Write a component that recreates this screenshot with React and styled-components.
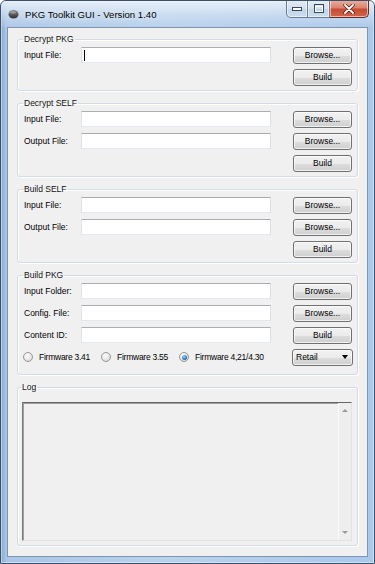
import React from "react";
import styled, { createGlobalStyle, css } from "styled-components";

const GlobalStyle = createGlobalStyle`
  * { box-sizing: border-box; }
  html, body { margin: 0; padding: 0; background: #ffffff; }
  body { font-family: "Liberation Sans", Arial, sans-serif; }
`;

const Window = styled.div`
  width: 375px;
  height: 564px;
  display: flex;
  flex-direction: column;
  padding: 0 6px 6px;
  border: 1px solid #3b4f66;
  border-radius: 6px 6px 0 0;
  background: linear-gradient(90deg, #86a8d0 0, #a9c6e8 5px, #b9d2ee 45%, #a9c8ec 100%);
  box-shadow: inset 0 0 0 1px rgba(255, 255, 255, 0.45);
  overflow: hidden;
`;

const TitleBar = styled.div`
  height: 26px;
  margin: 0 -6px;
  padding: 0 0 0 7px;
  display: flex;
  align-items: center;
  background: linear-gradient(180deg, rgba(240, 245, 251, 0.85) 0, rgba(214, 227, 242, 0.6) 55%, rgba(190, 210, 234, 0.2) 100%);
`;

const Title = styled.span`
  margin-left: 6px;
  font-size: 9.6px;
  color: #000;
  text-shadow: 0 0 6px rgba(255, 255, 255, 0.9);
`;

const Controls = styled.div`
  align-self: flex-start;
  margin: -1px 5px 0 auto;
  display: flex;
  height: 18px;
`;

const CtrlButton = styled.div`
  width: ${(p) => (p.$close ? 39 : 22)}px;
  height: 18px;
  display: flex;
  align-items: center;
  justify-content: center;
  border: 1px solid #6a7c92;
  border-top: none;
  border-left-width: ${(p) => (p.$first ? 1 : 0)}px;
  border-radius: ${(p) => (p.$first ? "0 0 0 5px" : p.$close ? "0 0 5px 0" : "0")};
  background: linear-gradient(180deg, #e4ecf5 0, #d3e0ee 50%, #c2d4e8 51%, #cddcee 100%);
  box-shadow: inset 0 0 0 1px rgba(255, 255, 255, 0.55);
  ${(p) =>
    p.$close &&
    css`
      border-color: #6b2a20;
      background: linear-gradient(180deg, #eab1a4 0, #db8470 45%, #c74a33 55%, #d0664c 100%);
    `}
`;

const Client = styled.div`
  flex: 1;
  min-height: 0;
  display: flex;
  flex-direction: column;
  gap: 7px;
  padding: 6px 9px 10px;
  background: #f0f0f0;
  border: 1px solid #8094ae;
`;

const Group = styled.fieldset`
  margin: 0;
  min-width: 0;
  padding: 0 5px 2px ${(p) => p.$inset ?? 6}px;
  border: 1px solid #d3dce2;
  border-radius: 3px;
  box-shadow: 1px 1px 0 #ffffff, inset 1px 1px 0 #ffffff;
  ${(p) =>
    p.$grow &&
    css`
      flex: 1;
      display: flex;
      flex-direction: column;
      padding-bottom: 4px;
    `}
`;

const Legend = styled.legend`
  margin-left: -1px;
  padding: 0 1px;
  font-size: 8.5px;
  line-height: 10px;
  color: #111;
`;

const Row = styled.div`
  height: ${(p) => (p.$tall ? 26 : 22)}px;
  padding-bottom: ${(p) => (p.$tall ? 4 : 0)}px;
  display: flex;
  align-items: center;
`;

const Label = styled.span`
  width: 57px;
  flex: none;
  font-size: 8.5px;
  color: #000;
  white-space: nowrap;
`;

const TextBox = styled.div`
  width: 190px;
  height: 16px;
  display: flex;
  align-items: center;
  padding-left: 2px;
  background: #ffffff;
  border: 1px solid;
  border-color: #abadb3 #dbdfe6 #e3e9ef #e2e3ea;
`;

const Caret = styled.span`
  width: 1px;
  height: 11px;
  background: #000;
`;

const buttonFace = css`
  height: 17px;
  font-family: "Liberation Sans", Arial, sans-serif;
  font-size: 8.5px;
  color: #000;
  border: 1px solid #707070;
  border-radius: 3px;
  background: linear-gradient(180deg, #f2f2f2 0, #ebebeb 50%, #dddddd 51%, #cfcfcf 100%);
  box-shadow: inset 0 0 0 1px rgba(255, 255, 255, 0.7);
`;

const Button = styled.button`
  ${buttonFace};
  width: 59px;
  margin-left: auto;
  padding: 0;
`;

const Select = styled.div`
  ${buttonFace};
  width: 61px;
  margin: 0 -1px 0 auto;
  padding: 0 4px 0 3px;
  display: flex;
  align-items: center;
  justify-content: space-between;
`;

const DownArrow = styled.span`
  width: 0;
  height: 0;
  border-left: 3.5px solid transparent;
  border-right: 3.5px solid transparent;
  border-top: 4px solid #000;
`;

const Radios = styled.div`
  display: flex;
  margin-left: -1px;
`;

const RadioItem = styled.label`
  width: 78px;
  flex: none;
  display: flex;
  align-items: center;
  gap: 6px;
  font-size: 8.5px;
  letter-spacing: -0.25px;
  color: #000;
  white-space: nowrap;
`;

const RadioDot = styled.span`
  width: 10px;
  height: 10px;
  flex: none;
  border-radius: 50%;
  border: 1px solid #979797;
  background: radial-gradient(circle at 40% 35%, #ffffff 0, #e6e6e6 55%, #cfcfcf 100%);
  display: flex;
  align-items: center;
  justify-content: center;
  &::after {
    content: "";
    width: 5px;
    height: 5px;
    border-radius: 50%;
    background: ${(p) =>
      p.$checked ? "radial-gradient(circle at 40% 35%, #9fd8f7 0, #2f7fc7 55%, #173f73 100%)" : "transparent"};
  }
`;

const LogBox = styled.div`
  flex: 1;
  margin: 10px 0 0 0;
  display: flex;
  justify-content: flex-end;
  background: #f0f0f0;
  border: 1px solid;
  border-color: #656565 #e3e3e3 #e3e3e3 #7a7a7a;
  box-shadow: inset 1px 1px 0 #a0a0a0;
`;

const ScrollBar = styled.div`
  width: 13px;
  display: flex;
  flex-direction: column;
  align-items: center;
  justify-content: space-between;
  padding: 6px 0 6px;
  border-left: 1px solid #fafafa;
  background: #eeeeee;
`;

const ScrollArrow = styled.span`
  width: 0;
  height: 0;
  border-left: 3px solid transparent;
  border-right: 3px solid transparent;
  ${(p) =>
    p.$up ? "border-bottom: 3px solid #9a9a9a;" : "border-top: 3px solid #9a9a9a;"}
`;

function AppIcon() {
  return (
    <svg width="11" height="10" viewBox="0 0 11 10">
      <defs>
        <linearGradient id="ic" x1="0" y1="0" x2="0" y2="1">
          <stop offset="0" stopColor="#8a8a8a" />
          <stop offset="1" stopColor="#2e2e2e" />
        </linearGradient>
      </defs>
      <ellipse cx="5.5" cy="5.2" rx="5" ry="4.3" fill="url(#ic)" />
      <ellipse cx="5" cy="3.4" rx="3" ry="1.3" fill="#b5b5b5" opacity="0.6" />
    </svg>
  );
}

function WindowControls() {
  return (
    <Controls>
      <CtrlButton $first>
        <svg width="10" height="5" viewBox="0 0 10 5">
          <rect x="0.5" y="1.5" width="9" height="3" fill="#fff" stroke="#38485c" />
        </svg>
      </CtrlButton>
      <CtrlButton>
        <svg width="10" height="9" viewBox="0 0 10 9">
          <rect x="0.5" y="0.5" width="9" height="8" fill="none" stroke="#38485c" />
          <rect x="1.5" y="2.5" width="7" height="5" fill="none" stroke="#fff" />
        </svg>
      </CtrlButton>
      <CtrlButton $close>
        <svg width="12" height="10" viewBox="0 0 12 10">
          <path d="M2 1 L10 9 M10 1 L2 9" stroke="#5a1d14" strokeWidth="3.4" strokeLinecap="round" />
          <path d="M2 1 L10 9 M10 1 L2 9" stroke="#ffffff" strokeWidth="1.8" strokeLinecap="round" />
        </svg>
      </CtrlButton>
    </Controls>
  );
}

function FileRow({ label, button, focused }) {
  return (
    <Row>
      <Label>{label}</Label>
      <TextBox>{focused && <Caret />}</TextBox>
      <Button>{button}</Button>
    </Row>
  );
}

function BuildRow() {
  return (
    <Row>
      <Button>Build</Button>
    </Row>
  );
}

const firmwares = ["Firmware 3.41", "Firmware 3.55", "Firmware 4,21/4.30"];

export default function App() {
  return (
    <>
      <GlobalStyle />
      <Window>
        <TitleBar>
          <AppIcon />
          <Title>PKG Toolkit GUI - Version 1.40</Title>
          <WindowControls />
        </TitleBar>
        <Client>
          <Group>
            <Legend>Decrypt PKG</Legend>
            <FileRow label="Input File:" button="Browse..." focused />
            <BuildRow />
          </Group>

          <Group>
            <Legend>Decrypt SELF</Legend>
            <FileRow label="Input File:" button="Browse..." />
            <FileRow label="Output File:" button="Browse..." />
            <BuildRow />
          </Group>

          <Group>
            <Legend>Build SELF</Legend>
            <FileRow label="Input File:" button="Browse..." />
            <FileRow label="Output File:" button="Browse..." />
            <BuildRow />
          </Group>

          <Group>
            <Legend>Build PKG</Legend>
            <FileRow label="Input Folder:" button="Browse..." />
            <FileRow label="Config. File:" button="Browse..." />
            <FileRow label="Content ID:" button="Build" />
            <Row $tall>
              <Radios>
                {firmwares.map((fw, i) => (
                  <RadioItem key={fw}>
                    <RadioDot $checked={i === 2} />
                    {fw}
                  </RadioItem>
                ))}
              </Radios>
              <Select>
                <span>Retail</span>
                <DownArrow />
              </Select>
            </Row>
          </Group>

          <Group $grow $inset={4}>
            <Legend>Log</Legend>
            <LogBox>
              <ScrollBar>
                <ScrollArrow $up />
                <ScrollArrow />
              </ScrollBar>
            </LogBox>
          </Group>
        </Client>
      </Window>
    </>
  );
}
